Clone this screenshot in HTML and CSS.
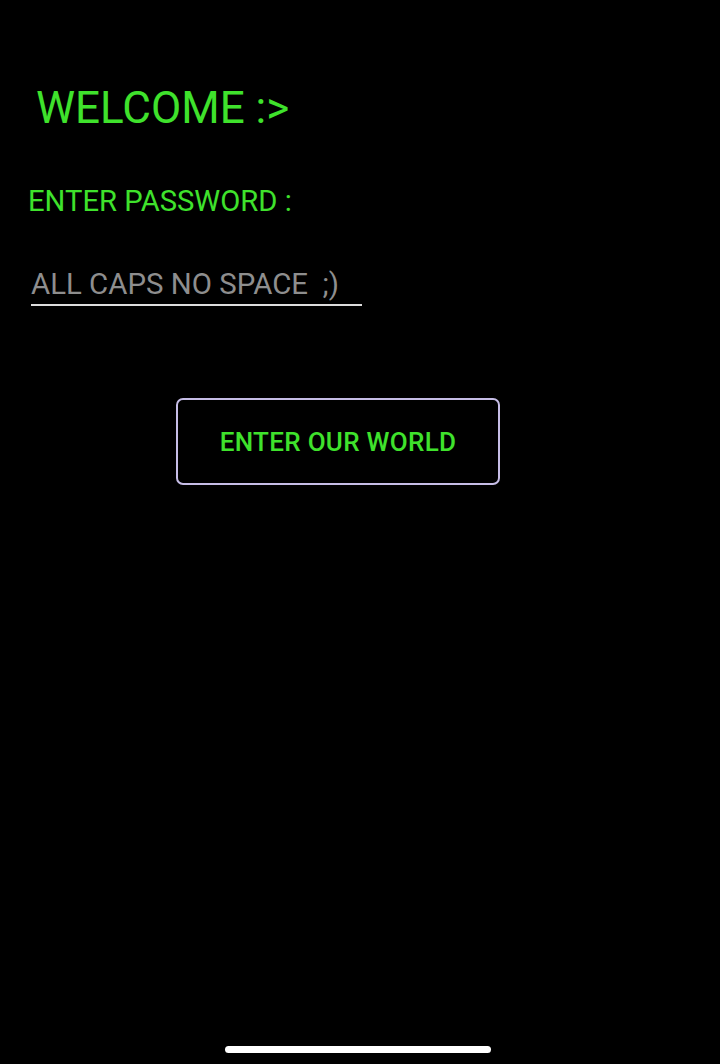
FILE: index.html
```html
<!DOCTYPE html>
<html>
<head>
<meta charset="utf-8">
<link rel="stylesheet" href="styles.css">
</head>
<body>
<div class="screen">
  <h1 class="welcome">WELCOME :&gt;</h1>
  <div class="label">ENTER PASSWORD :</div>
  <div class="field"><span class="placeholder">ALL CAPS NO SPACE &nbsp;;)</span></div>
  <div class="btn-row"><button class="btn">ENTER OUR WORLD</button></div>
  <div class="spacer"></div>
  <div class="home-bar"></div>
</div>
</body>
</html>
```
FILE: styles.css
```css
html, body {
  margin: 0;
  padding: 0;
  background: #000;
}
.screen {
  width: 720px;
  height: 1064px;
  display: flex;
  flex-direction: column;
  font-family: Roboto, "Liberation Sans", sans-serif;
  box-sizing: border-box;
}
.welcome {
  margin: 80px 0 0 36px;
  font-size: 44px;
  font-weight: 400;
  line-height: 56px;
  color: #3fe22c;
}
.label {
  margin: 47px 0 0 28px;
  font-size: 29.2px;
  line-height: 36px;
  color: #3fe22c;
}
.field {
  margin: 48px 0 0 31px;
  width: 331px;
  border-bottom: 2px solid #dcdcdc;
  padding-bottom: 3px;
}
.placeholder {
  font-size: 29.4px;
  line-height: 34px;
  color: #8e8e8e;
  white-space: pre;
}
.btn-row {
  display: flex;
  margin: 92px 0 0 176px;
}
.btn {
  width: 324px;
  height: 87px;
  background: #000;
  border: 2px solid #c6bde6;
  border-radius: 7px;
  color: #3fe22c;
  font-family: Roboto, "Liberation Sans", sans-serif;
  font-size: 26px;
  font-weight: 500;
  letter-spacing: 0.3px;
  padding: 0;
}
.spacer { flex: 1; }
.home-bar {
  align-self: flex-start;
  margin: 0 0 11px 225px;
  width: 266px;
  height: 7px;
  border-radius: 4px;
  background: #fff;
}
```
